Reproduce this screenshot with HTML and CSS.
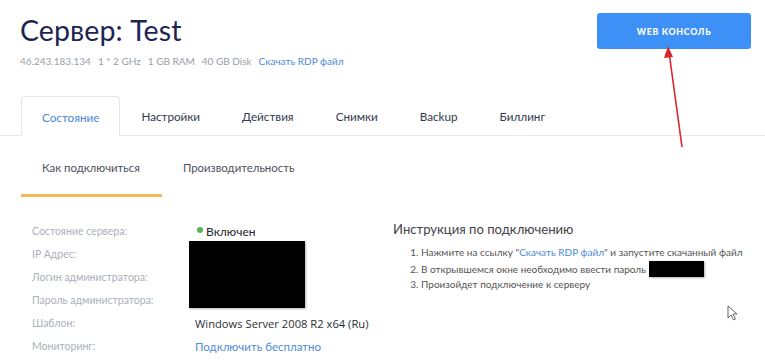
FILE: index.html
```html
<!DOCTYPE html>
<html lang="ru">
<head>
<meta charset="utf-8">
<link rel="stylesheet" href="styles.css">
</head>
<body>
<div class="page">
  <header class="header">
    <div class="head-left">
      <h1 class="title">Сервер: Test</h1>
      <div class="info">
        <span>46.243.183.134</span><span>1 * 2 GHz</span><span>1 GB RAM</span><span>40 GB Disk</span><a class="link">Скачать RDP файл</a>
      </div>
    </div>
    <button class="console-btn">WEB КОНСОЛЬ</button>
  </header>

  <nav class="tabs">
    <div class="tab active">Состояние</div>
    <div class="tab">Настройки</div>
    <div class="tab">Действия</div>
    <div class="tab">Снимки</div>
    <div class="tab">Backup</div>
    <div class="tab">Биллинг</div>
  </nav>

  <nav class="subtabs">
    <div class="subtab active">Как подключиться</div>
    <div class="subtab">Производительность</div>
  </nav>

  <section class="content">
    <div class="details">
      <div class="label">Состояние сервера:</div>
      <div class="value status"><span class="dot"></span>Включен</div>
      <div class="label">IP Адрес:</div>
      <div class="redact-cell"><div class="redact"></div></div>
      <div class="label">Логин администратора:</div>
      <div class="label">Пароль администратора:</div>
      <div class="label">Шаблон:</div>
      <div class="value os">Windows Server 2008 R2 x64 (Ru)</div>
      <div class="label">Мониторинг:</div>
      <div class="value"><a class="link mon">Подключить бесплатно</a></div>
    </div>
    <div class="instr">
      <h2 class="instr-title">Инструкция по подключению</h2>
      <ol class="steps">
        <li>Нажмите на ссылку "<a class="link">Скачать RDP файл</a>" и запустите скачанный файл</li>
        <li>В открывшемся окне необходимо ввести пароль <span class="redact-inline"></span></li>
        <li>Произойдет подключение к серверу</li>
      </ol>
    </div>
  </section>

  <svg class="arrow" width="40" height="110" viewBox="0 0 40 110">
    <line x1="34" y1="103" x2="21" y2="8" stroke="#d9262b" stroke-width="1.6"/>
    <polygon points="20,2 16,14 25,13" fill="#d9262b"/>
  </svg>
  <svg class="cursor" width="12" height="16" viewBox="0 0 12 16">
    <path d="M1 1 L1 13 L4 10 L6.5 15 L8.5 14 L6 9 L10 9 Z" fill="#fff" stroke="#555" stroke-width="0.9" stroke-linejoin="round"/>
  </svg>
</div>
</body>
</html>
```

FILE: styles.css
```css
* { box-sizing: border-box; }
html, body { margin: 0; padding: 0; background: #fff; }
body { font-family: Lato, "Noto Sans", sans-serif; color: #2b3147; }
.page { position: relative; width: 765px; height: 364px; overflow: hidden; }

.header { display: flex; justify-content: space-between; align-items: flex-start; padding: 13px 14px 0 20px; height: 96px; }
.title { margin: 1px 0 0 0; font-size: 28.5px; line-height: 32px; font-weight: 400; color: #1c2554; letter-spacing: 0.1px; }
.info { display: flex; gap: 7px; margin-top: 8px; font-size: 10px; line-height: 14px; color: #9a9ea6; }
.link { color: #4f8ad8; text-decoration: none; }
.console-btn { width: 154px; height: 36px; border: none; border-radius: 3px; background: #3d91f6; color: #fff; font-family: Lato, sans-serif; font-weight: 900; font-size: 8.8px; letter-spacing: 0.7px; }

.tabs { display: flex; height: 40px; border-bottom: 1px solid #e6e9ef; padding-left: 21px; }
.tab { padding: 0 21px; display: flex; align-items: center; font-size: 11.7px; color: #323a4e; height: 40px; }
.tab.active { border: 1px solid #e3e6ec; border-bottom: none; border-radius: 4px 4px 0 0; background: #fff; color: #4a86d8; height: 40px; padding: 0 20px; }

.subtabs { display: flex; padding-left: 21px; }
.subtab { padding: 24px 22px 18px 21px; font-size: 11.4px; line-height: 16px; color: #4a5060; border-bottom: 3px solid transparent; }
.subtab.active { border-bottom-color: #f5b955; }

.content { display: flex; padding-top: 23px; }
.details { display: grid; grid-template-columns: 163px 198px; grid-auto-rows: 23px; padding-left: 32px; width: 393px; }
.label { font-size: 10.5px; color: #abb0ba; line-height: 23px; grid-column: 1; }
.value { grid-column: 2; font-family: "Open Sans", sans-serif; font-size: 11.2px; line-height: 23px; color: #2d2f36; }
.status { display: flex; align-items: center; color: #23252b; font-family: Lato, sans-serif; font-size: 12px; }
.dot { width: 6px; height: 6px; border-radius: 50%; background: #55b45a; margin: 0 3px 4px 2px; }
.redact-cell { grid-column: 2; grid-row: 2 / span 3; position: relative; }
.redact { width: 116px; height: 67px; background: #000; margin: -2px 0 0 -6px; box-shadow: 1px 1px 2px rgba(0,0,0,0.3); }
.mon { font-family: Lato, sans-serif; font-size: 11.5px; }

.instr { font-family: Lato, sans-serif; color: #4d5058; }
.instr-title { margin: -1px 0 0 0; font-weight: 400; font-size: 13.1px; line-height: 20px; color: #3f4249; }
.steps { margin: 6px 0 0 0; padding-left: 28px; font-size: 10px; line-height: 15.5px; color: #555; white-space: nowrap; }
.redact-inline { display: inline-block; width: 55px; height: 16px; background: #000; vertical-align: -4px; box-shadow: 1px 1px 2px rgba(0,0,0,0.3); }

.arrow { position: absolute; left: 648px; top: 44px; }
.cursor { position: absolute; left: 727px; top: 305px; }
```
